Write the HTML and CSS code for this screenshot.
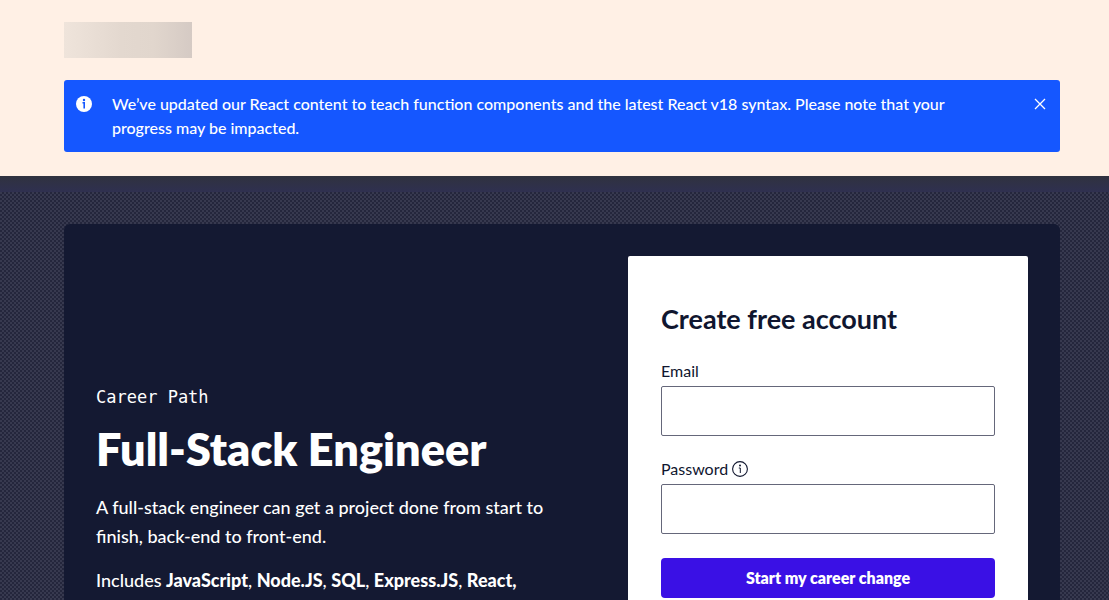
FILE: index.html
```html
<!DOCTYPE html>
<html lang="en">
<head>
<meta charset="utf-8">
<meta name="viewport" content="width=device-width, initial-scale=1">
<title>Full-Stack Engineer</title>
<link rel="stylesheet" href="styles.css">
</head>
<body>
<header class="top">
  <div class="logo-placeholder"></div>
  <div class="notice" role="status">
    <svg class="notice-icon" viewBox="0 0 16 16" aria-hidden="true"><circle cx="8" cy="8" r="8" fill="#fff"/><circle cx="8" cy="4" r="1.2" fill="#1557ff"/><path d="M6.5 6.8H8.2V12.4" fill="none" stroke="#1557ff" stroke-width="1.6"/></svg>
    <p class="notice-text">We’ve updated our React content to teach function components and the latest React v18 syntax. Please note that your progress may be impacted.</p>
    <button class="close" type="button" aria-label="Close"><svg viewBox="0 0 12 12" aria-hidden="true"><path d="M1 1L11 11M11 1L1 11" fill="none" stroke="#fff" stroke-width="1.3"/></svg></button>
  </div>
</header>
<main class="hero">
  <div class="panel">
    <section class="intro">
      <p class="eyebrow">Career Path</p>
      <h1 class="title">Full-Stack Engineer</h1>
      <p class="lead">A full-stack engineer can get a project done from start to finish, back-end to front-end.</p>
      <p class="lead">Includes <b>JavaScript</b>, <b>Node.JS</b>, <b>SQL</b>, <b>Express.JS</b>, <b>React,</b></p>
    </section>
    <form class="signup">
      <h2 class="signup-title">Create free account</h2>
      <div class="field">
        <label class="label" for="email">Email</label>
        <input class="input" id="email" type="email">
      </div>
      <div class="field">
        <div class="label-row">
          <label class="label" for="password">Password</label>
          <button class="tip" type="button" aria-label="Password requirements"><svg viewBox="0 0 16 16" aria-hidden="true"><circle cx="8" cy="8" r="7.4" fill="none" stroke="#10162f" stroke-width="1.1"/><circle cx="8" cy="4.6" r="1" fill="#10162f"/><path d="M6.8 7H8.3V12" fill="none" stroke="#10162f"/></svg></button>
        </div>
        <input class="input" id="password" type="password">
      </div>
      <button class="submit" type="submit">Start my career change</button>
    </form>
  </div>
</main>
</body>
</html>
```
FILE: styles.css
```css
* { box-sizing: border-box; }
body {
  margin: 0;
  background: #2c2e46;
  color: #10162f;
  font: 16px/24px Lato, "Open Sans", sans-serif;
}
h1, h2, p { margin: 0; }
button { border: 0; padding: 0; background: none; font: inherit; cursor: pointer; }
svg { display: block; width: 100%; }
.top {
  padding: 22px 49px 24px 64px;
  background: #fff0e5;
}
.logo-placeholder {
  width: 128px;
  height: 36px;
  margin-bottom: 22px;
  background: linear-gradient(90deg, #efe4db, #e3d8cf 45%, #e1d6cd 70%, #d5cac4);
}
.notice {
  display: flex;
  align-items: flex-start;
  padding: 12px;
  border-radius: 3px;
  background: #1557ff;
  color: #fff;
}
.notice-icon { flex: none; width: 16px; margin: 4px 20px 0 0; }
.notice-text { flex: 1; max-width: 850px; font-weight: 500; }
.close { width: 16px; margin: 4px 0 0 auto; padding: 2px; }
.hero {
  padding: 48px 49px 48px 64px;
  background-color: #37394f;
  background-image:
    linear-gradient(#30323f, #2f3050),
    conic-gradient(#24263c 25%, transparent 0),
    conic-gradient(#24263c 25%, transparent 0);
  background-size: 100% 16px, 4px 4px, 4px 4px;
  background-position: 0 0, 0 0, 2px 2px;
  background-repeat: no-repeat, repeat, repeat;
}
.panel {
  display: flex;
  align-items: center;
  justify-content: space-between;
  padding: 32px;
  border-radius: 6px;
  background: #141932;
}
.intro { width: 468px; padding-top: 76px; color: #fff; }
.eyebrow { font: 17px/24px "DejaVu Sans Mono", monospace; }
.title { margin: 12px 0 16px; font-size: 45px; font-weight: 800; line-height: 56px; }
.lead { margin-bottom: 15px; font-size: 18px; font-weight: 500; line-height: 29px; }
.lead b { font-weight: 900; }
.signup {
  width: 400px;
  padding: 46px 33px 64px;
  border-radius: 2px;
  background: #fff;
}
.signup-title { margin-bottom: 24px; font-size: 27px; line-height: 34px; }
.field { margin-bottom: 22px; }
.label { display: block; line-height: 22px; }
.label-row { display: flex; align-items: center; gap: 4px; }
.tip { width: 16px; }
.input {
  display: block;
  width: 100%;
  height: 50px;
  margin-top: 4px;
  padding: 0 12px;
  border: 1px solid #65677a;
  border-radius: 2px;
  background: #fff;
  font: inherit;
}
.submit {
  display: block;
  width: 100%;
  height: 40px;
  margin-top: 24px;
  border-radius: 4px;
  background: #3a10e5;
  color: #fff;
  font-weight: 800;
}
```
